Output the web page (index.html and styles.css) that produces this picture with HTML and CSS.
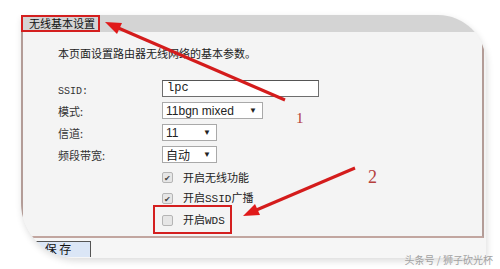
FILE: index.html
```html
<!DOCTYPE html>
<html lang="zh-CN">
<head>
  <meta charset="UTF-8">
  <meta name="viewport" content="width=device-width, initial-scale=1.0">
  <title>无线基本设置</title>
  <link rel="stylesheet" href="styles.css">
</head>
<body>
  <div class="shot">
    <div class="head">
      <span class="title">无线基本设置</span>
    </div>
    <div class="panel">
      <p class="intro">本页面设置路由器无线网络的基本参数。</p>
      <div class="form">
        <span class="label"><span class="mono">SSID:</span></span>
        <div class="field">lpc</div>
        <span class="label">模式:</span>
        <div class="select wide"><span>11bgn mixed</span><i>▼</i></div>
        <span class="label">信道:</span>
        <div class="select narrow"><span>11</span><i>▼</i></div>
        <span class="label">频段带宽:</span>
        <div class="select narrow"><span>自动</span><i>▼</i></div>
      </div>
      <div class="checks">
        <div class="check"><span class="box">✔</span><span>开启无线功能</span></div>
        <div class="check"><span class="box">✔</span><span>开启<span class="mono">SSID</span>广播</span></div>
        <div class="check mark"><span class="box"></span><span>开启<span class="mono">WDS</span></span></div>
      </div>
    </div>
    <div class="foot">
      <span class="save">保 存</span>
    </div>
  </div>

  <!-- annotations drawn over the screenshot -->
  <svg class="notes" width="500" height="269" viewBox="0 0 500 269">
    <line x1="285" y1="100" x2="116" y2="27" stroke="#d41c1c" stroke-width="3"/>
    <polygon points="105,22 122,23 117,34" fill="#e01a1a"/>
    <line x1="355" y1="168" x2="254" y2="211" stroke="#d41c1c" stroke-width="3"/>
    <polygon points="243,216 255,204 260,215" fill="#e01a1a"/>
    <text x="296" y="123" class="num">1</text>
    <text x="368" y="183" class="num big">2</text>
  </svg>
  <div class="watermark">头条号 / 狮子砍光杯</div>
</body>
</html>
```

FILE: styles.css
```css
body {
  margin: 0;
  width: 500px;
  height: 269px;
  overflow: hidden;
  position: relative;
  background: #fff;
  color: #222;
  font-family: "Noto Sans CJK SC", sans-serif;
  font-size: 11px;
}
.shot {
  margin: 15px 0 0 21px;
  width: 465px;
  height: 243px;
  border-radius: 0 48px 0 55px;
  overflow: hidden;
  background: #f3f3f3;
  box-shadow: 1px 3px 7px rgba(0, 0, 0, 0.14);
  display: flex;
  flex-direction: column;
}
.head {
  flex: none;
  height: 17px;
  background: #d4d4d4;
  display: flex;
}
.title {
  box-sizing: border-box;
  width: 79px;
  border: 2px solid #d41f1f;
  padding-left: 6px;
  line-height: 13px;
  color: #111;
}
.panel {
  flex: none;
  box-sizing: border-box;
  height: 206px;
  margin-right: 2px;
  padding: 14px 0 0 35px;
  background: #f4f4f4;
  border-left: 2px solid #b39c97;
  border-right: 2px solid #b39c97;
  border-bottom: 2px solid #c2a6a0;
}
.intro {
  margin: 0;
  line-height: 14px;
}
.form {
  margin-top: 20px;
  display: grid;
  grid-template-columns: 104px auto;
  row-gap: 5px;
  align-items: center;
  justify-items: start;
}
.label {
  color: #333;
}
.field {
  box-sizing: border-box;
  width: 157px;
  height: 17px;
  padding-left: 4px;
  background: #fff;
  border: 1px solid #6e6e6e;
  border-top-color: #555;
  font: 12px/15px "Liberation Mono", monospace;
}
.select {
  box-sizing: border-box;
  height: 17px;
  padding: 0 5px 0 3px;
  background: #fff;
  border: 1px solid #a9a9a9;
  display: flex;
  justify-content: space-between;
  align-items: center;
  font: 12px "Liberation Sans", "Noto Sans CJK SC", sans-serif;
}
.select i {
  font-style: normal;
  font-size: 8px;
}
.wide {
  width: 101px;
}
.narrow {
  width: 55px;
}
.checks {
  margin: 4px 0 0 104px;
}
.check {
  display: flex;
  align-items: center;
  gap: 10px;
  width: fit-content;
  line-height: 20px;
}
.mono {
  font-family: "Liberation Mono", monospace;
  font-size: 10px;
}
.check .mono {
  font-size: 11px;
}
.box {
  box-sizing: border-box;
  width: 11px;
  height: 11px;
  border: 1px solid #b5b5b5;
  border-radius: 2px;
  background: #e6e6e6;
  color: #444;
  font-size: 8px;
  line-height: 9px;
  text-align: center;
}
.check.mark {
  margin: -2px 0 0 -7px;
  padding: 2px 5px 1px 7px;
  outline: 2px solid #d41f1f;
}
.foot {
  flex: 1;
  padding-top: 3px;
  background: #f6f6f6;
}
.save {
  display: block;
  box-sizing: border-box;
  width: 66px;
  height: 16px;
  margin-left: 4px;
  background: #dbe6f6;
  border: 1px solid #555;
  border-bottom: none;
  text-align: center;
  font-size: 12px;
  line-height: 14px;
  color: #111;
}
.notes {
  position: absolute;
  top: 0;
  left: 0;
}
.num {
  font-family: "Liberation Serif", serif;
  font-size: 15px;
  fill: #b5403c;
}
.num.big {
  font-size: 18px;
}
.watermark {
  position: absolute;
  right: 7px;
  bottom: 2px;
  font-size: 10px;
  color: #a2a2a2;
}
```
